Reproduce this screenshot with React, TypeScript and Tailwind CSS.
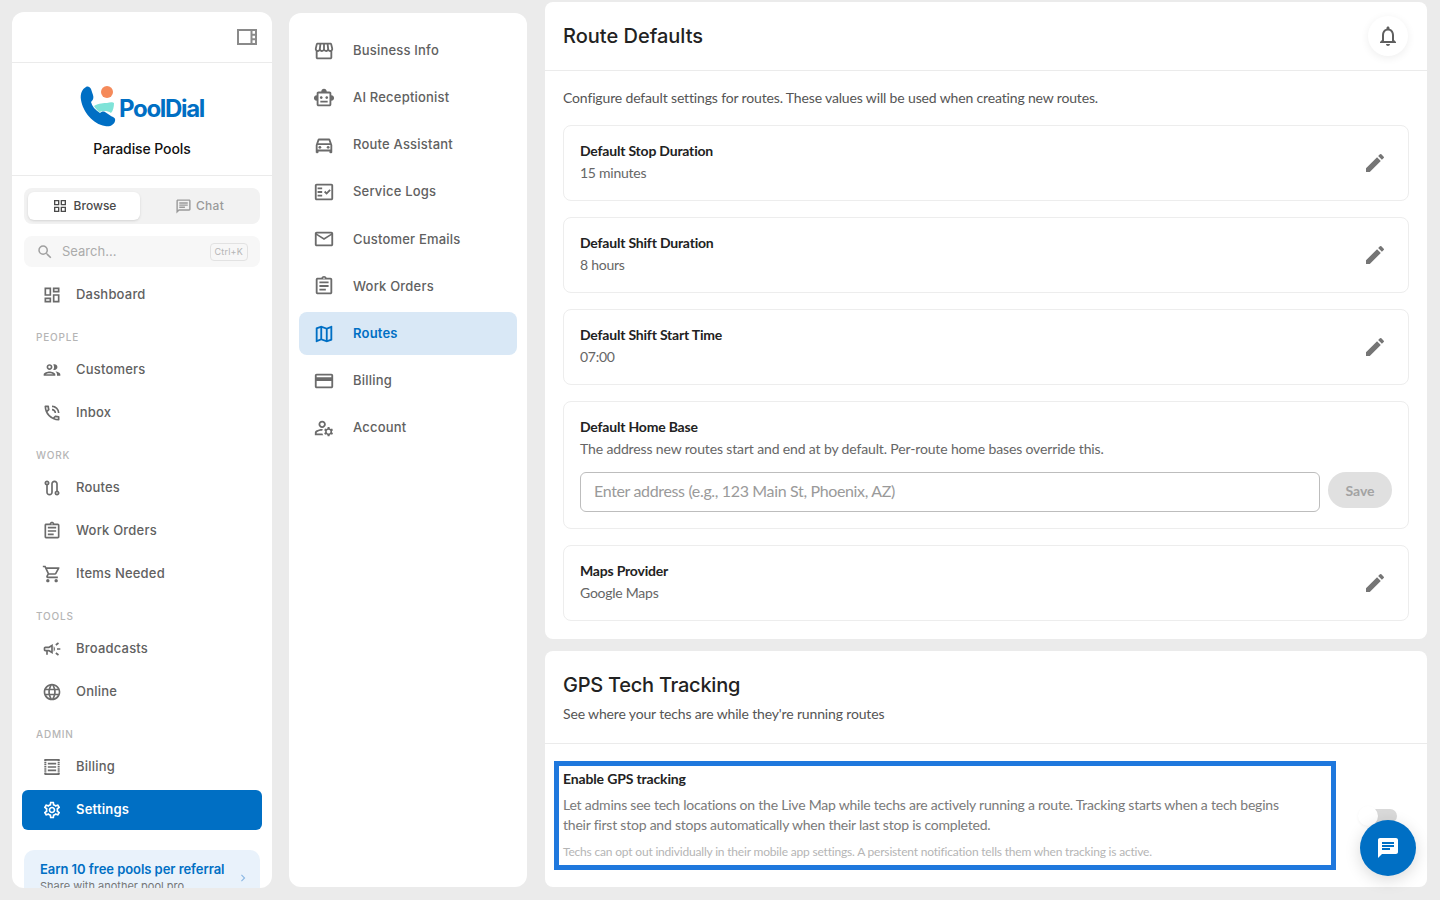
import React from 'react';
import {
  MdChat,
  MdChevronRight,
  MdEdit,
  MdOutlineAssignment,
  MdOutlineCampaign,
  MdOutlineChat,
  MdOutlineCreditCard,
  MdOutlineDashboard,
  MdOutlineDirectionsCar,
  MdOutlineFactCheck,
  MdOutlineGridView,
  MdOutlineLanguage,
  MdOutlineMailOutline,
  MdOutlineManageAccounts,
  MdOutlineMap,
  MdOutlineNotifications,
  MdOutlinePeople,
  MdOutlinePhoneInTalk,
  MdOutlineRoute,
  MdOutlineSettings,
  MdOutlineShoppingCart,
  MdOutlineSmartToy,
  MdOutlineStorefront,
  MdOutlineViewSidebar,
  MdSearch,
} from 'react-icons/md';

const DM = "font-['Inter','Noto_Sans',sans-serif]";

type IconType = React.ComponentType<{ size?: number; className?: string }>;

// receipt-like icon, dotted on the left and right edges
const BillingIcon: IconType = ({ size = 20, className }) => (
  <svg width={size} height={size} viewBox="0 0 24 24" fill="none" stroke="currentColor" className={className}>
    <path d="M3 3.5h18M3 20.5h18" strokeWidth="2.2" />
    <path d="M4 3v18M20 3v18" strokeWidth="2.4" strokeDasharray="1.8 0.8" />
    <path d="M7 8h10M7 12h10M7 16h10" strokeWidth="2" />
  </svg>
);

const NavItem = ({ icon: Icon, label, active }: { icon: IconType; label: string; active?: boolean }) => (
  <div className={`flex items-center h-10 mx-[10px] pl-5 rounded-md ${active ? 'bg-[#006fc4] text-white font-semibold' : 'text-[#616161] font-medium'}`}>
    <Icon size={20} className={active ? 'text-white' : 'text-[#6b6b6b]'} />
    <span className="ml-[14px] text-[13px] tracking-[0.2px]">{label}</span>
  </div>
);

const SectionLabel = ({ children }: { children: React.ReactNode }) => (
  <div className="pt-[16px] pb-[7px] pl-6 text-[10px] leading-3 tracking-[0.8px] font-medium text-[#b5b5b5]">{children}</div>
);

const Logo = () => (
  <div className="flex items-end">
    <svg width="38" height="42" viewBox="0 0 38 42" className="shrink-0">
      <path d="M6 1 C2 3 0 8 1 14 C3 26 13 38 25 40 C30 41 34 39 35 35 C36 32 33 31 31 30 L25 26 C23 25 21 26 20 27 C15 24 12 20 11 16 C13 14 14 12 13 9 L11 3 C10 1 8 0 6 1 Z" fill="#006fc4" />
      <circle cx="27" cy="6" r="6" fill="#f58a5a" />
      <path d="M14 20 C19 17 24 17 27 17 C30 16 33 16 34 17 C34 21 33 25 31 27 C27 24 22 25 19 26 C17 24 15 22 14 20 Z" fill="#7fe3d8" />
    </svg>
    <span className="ml-[1px] mb-[5px] text-[24px] leading-7 font-bold tracking-[-1.35px] text-[#006fc4]">PoolDial</span>
  </div>
);

const Sidebar = () => (
  <aside className={`${DM} w-[260px] h-[876px] mt-3 ml-3 shrink-0 bg-white rounded-xl overflow-hidden`}>
    <div className="flex items-center justify-end h-[51px] pr-[13px] border-b border-[#ebebeb]">
      <MdOutlineViewSidebar size={24} className="text-[#8a8a8a]" />
    </div>
    <div className="flex flex-col items-center h-[113px] border-b border-[#ebebeb] pt-[23px]">
      <Logo />
      <div className="mt-[11px] text-[14px] leading-5 font-medium tracking-[-0.1px] text-[#111]">Paradise Pools</div>
    </div>
    <div className="mx-3 mt-3 flex h-9 p-1 rounded-lg bg-[#f2f2f2]">
      <div className="flex w-[112px] items-center justify-center gap-[6px] rounded-md bg-white text-[12px] font-medium text-[#4a4a4a] shadow-sm">
        <MdOutlineGridView size={16} />
        Browse
      </div>
      <div className="flex flex-1 items-center justify-center gap-[4px] pl-[3px] text-[12px] tracking-[0.3px] font-medium text-[#9a9a9a]">
        <MdOutlineChat size={17} />
        Chat
      </div>
    </div>
    <div className="mx-3 mt-3 flex items-center h-[31px] pl-[12px] pr-3 rounded-lg bg-[#f7f7f7]">
      <MdSearch size={18} className="text-[#a0a0a0]" />
      <span className="ml-[8px] flex-1 text-[13px] text-[#ababab]">Search...</span>
      <span className="px-1 h-[18px] leading-4 rounded border border-[#e2e2e2] text-[9px] tracking-[0.2px] text-[#b5b5b5]">Ctrl+K</span>
    </div>
    <div className="mt-[8px]">
      <NavItem icon={MdOutlineDashboard} label="Dashboard" />
      <SectionLabel>PEOPLE</SectionLabel>
      <div className="flex flex-col gap-[3px]">
        <NavItem icon={MdOutlinePeople} label="Customers" />
        <NavItem icon={MdOutlinePhoneInTalk} label="Inbox" />
      </div>
      <SectionLabel>WORK</SectionLabel>
      <div className="flex flex-col gap-[3px]">
        <NavItem icon={MdOutlineRoute} label="Routes" />
        <NavItem icon={MdOutlineAssignment} label="Work Orders" />
        <NavItem icon={MdOutlineShoppingCart} label="Items Needed" />
      </div>
      <SectionLabel>TOOLS</SectionLabel>
      <div className="flex flex-col gap-[3px]">
        <NavItem icon={MdOutlineCampaign} label="Broadcasts" />
        <NavItem icon={MdOutlineLanguage} label="Online" />
      </div>
      <SectionLabel>ADMIN</SectionLabel>
      <div className="flex flex-col gap-[3px]">
        <NavItem icon={BillingIcon} label="Billing" />
        <NavItem icon={MdOutlineSettings} label="Settings" active />
      </div>
    </div>
    <div className="mx-3 mt-5 flex items-center h-[56px] pl-4 pr-[10px] rounded-[10px] bg-[#e9f2fb]">
      <div className="flex-1 self-start pt-[9px]">
        <div className="text-[13px] leading-5 font-semibold text-[#006fc4] tracking-[-0.05px]">Earn 10 free pools per referral</div>
        <div className="text-[11px] leading-[14px] text-[#777]">Share with another pool pro</div>
      </div>
      <MdChevronRight size={14} className="text-[#8db9e4]" />
    </div>
  </aside>
);

const settingsNav = [
  { icon: MdOutlineStorefront, label: 'Business Info' },
  { icon: MdOutlineSmartToy, label: 'AI Receptionist' },
  { icon: MdOutlineDirectionsCar, label: 'Route Assistant' },
  { icon: MdOutlineFactCheck, label: 'Service Logs' },
  { icon: MdOutlineMailOutline, label: 'Customer Emails' },
  { icon: MdOutlineAssignment, label: 'Work Orders' },
  { icon: MdOutlineMap, label: 'Routes', active: true },
  { icon: MdOutlineCreditCard, label: 'Billing' },
  { icon: MdOutlineManageAccounts, label: 'Account' },
];

const SettingsNav = () => (
  <nav className={`${DM} w-[238px] h-[874px] mt-[13px] ml-[17px] shrink-0 bg-white rounded-xl pt-[16px] px-[10px] flex flex-col gap-[4.2px]`}>
    {settingsNav.map((item) => (
      <div
        key={item.label}
        className={`flex items-center h-[43px] pl-[14px] rounded-lg ${item.active ? 'bg-[#d9e8f6] text-[#006fc4] font-semibold' : 'text-[#616161] font-medium'}`}
      >
        <item.icon size={22} className={item.active ? 'text-[#006fc4]' : 'text-[#6b6b6b]'} />
        <span className="ml-[18px] text-[13px] tracking-[0.2px]">{item.label}</span>
      </div>
    ))}
  </nav>
);

const DefaultRow = ({ label, value }: { label: string; value: string }) => (
  <div className="flex items-center justify-between h-[76px] pl-4 pr-[21px] rounded-lg border border-[#ededed]">
    <div className="pb-[2px]">
      <div className="text-[14px] leading-[22px] font-bold tracking-[-0.2px] text-[#222]">{label}</div>
      <div className="text-[14px] leading-[22px] tracking-[-0.25px] text-[#666]">{value}</div>
    </div>
    <MdEdit size={24} className="text-[#757575]" />
  </div>
);

const RouteDefaults = () => (
  <section className="bg-white rounded-lg h-[637px]">
    <header className={`${DM} flex items-center justify-between h-[69px] pl-[18px] pr-[19px] border-b border-[#ebebeb]`}>
      <h1 className="text-[20px] font-medium text-[#222]">Route Defaults</h1>
      <button className="flex items-center justify-center w-10 h-10 rounded-full bg-white shadow-[0_2px_8px_rgba(0,0,0,0.07)]">
        <MdOutlineNotifications size={24} className="text-[#5f5f5f]" />
      </button>
    </header>
    <div className="px-[18px] pt-[17px]">
      <p className="text-[14px] leading-5 tracking-[-0.15px] text-[#555]">Configure default settings for routes. These values will be used when creating new routes.</p>
      <div className="mt-[17px] flex flex-col gap-4">
        <DefaultRow label="Default Stop Duration" value="15 minutes" />
        <DefaultRow label="Default Shift Duration" value="8 hours" />
        <DefaultRow label="Default Shift Start Time" value="07:00" />
        <div className="h-[128px] pt-[14px] px-4 rounded-lg border border-[#ededed]">
          <div className="text-[14px] leading-[22px] font-bold tracking-[-0.2px] text-[#222]">Default Home Base</div>
          <div className="text-[14px] leading-[22px] tracking-[-0.14px] text-[#666]">The address new routes start and end at by default. Per-route home bases override this.</div>
          <div className="mt-[12px] flex items-start gap-2">
            <div className="flex items-center flex-1 h-10 px-[13px] pb-[2px] rounded-md border border-[#bdbdbd] text-[16px] tracking-[-0.35px] text-[#9a9a9a]">Enter address (e.g., 123 Main St, Phoenix, AZ)</div>
            <button className="w-16 h-9 rounded-full bg-[#e0e0e0] text-[14px] font-bold text-[#a3a3a3]">Save</button>
          </div>
        </div>
        <DefaultRow label="Maps Provider" value="Google Maps" />
      </div>
    </div>
  </section>
);

const GpsTracking = () => (
  <section className="bg-white rounded-lg h-[236px] overflow-hidden">
    <div className="h-[93px] pt-[20px] pl-[18px] border-b border-[#ebebeb]">
      <h2 className={`${DM} text-[20px] leading-7 font-medium text-[#222] tracking-[-0.25px]`}>GPS Tech Tracking</h2>
      <p className="mt-[3px] text-[14px] leading-6 tracking-[-0.15px] text-[#555]">See where your techs are while they're running routes</p>
    </div>
    <div className="flex items-center mt-[17px] ml-[9px]">
      <div className="w-[782px] h-[109px] border-[5px] border-[#1f78dd] pl-1 pt-[3px]">
        <div className="text-[14px] leading-5 font-bold tracking-[-0.15px] text-[#222]">Enable GPS tracking</div>
        <p className="mt-[6px] max-w-[730px] text-[14px] leading-5 tracking-[-0.22px] text-[#7a7a7a]">Let admins see tech locations on the Live Map while techs are actively running a route. Tracking starts when a tech begins their first stop and stops automatically when their last stop is completed.</p>
        <p className="mt-[9px] text-[12px] leading-4 tracking-[-0.19px] text-[#b5b5b5]">Techs can opt out individually in their mobile app settings. A persistent notification tells them when tracking is active.</p>
      </div>
      <div className="relative ml-[27px] w-[34px] h-[14px] rounded-full bg-[#d9d9d9]">
        <div className="absolute -left-[5px] -top-[3px] w-5 h-5 rounded-full bg-white shadow-[0_1px_3px_rgba(0,0,0,0.05)]" />
      </div>
    </div>
  </section>
);

export default function App() {
  return (
    <div className="relative flex h-screen overflow-hidden bg-[#ebebeb] font-['Lato',sans-serif]">
      <Sidebar />
      <SettingsNav />
      <main className="w-[882px] ml-[18px] mt-[2px] shrink-0 flex flex-col gap-3">
        <RouteDefaults />
        <GpsTracking />
      </main>
      <button className="absolute left-[1360px] top-[820px] flex items-center justify-center w-14 h-14 rounded-full bg-[#006fc4] shadow-[0_4px_16px_rgba(0,0,0,0.15)]">
        <MdChat size={24} className="text-white" />
      </button>
    </div>
  );
}
